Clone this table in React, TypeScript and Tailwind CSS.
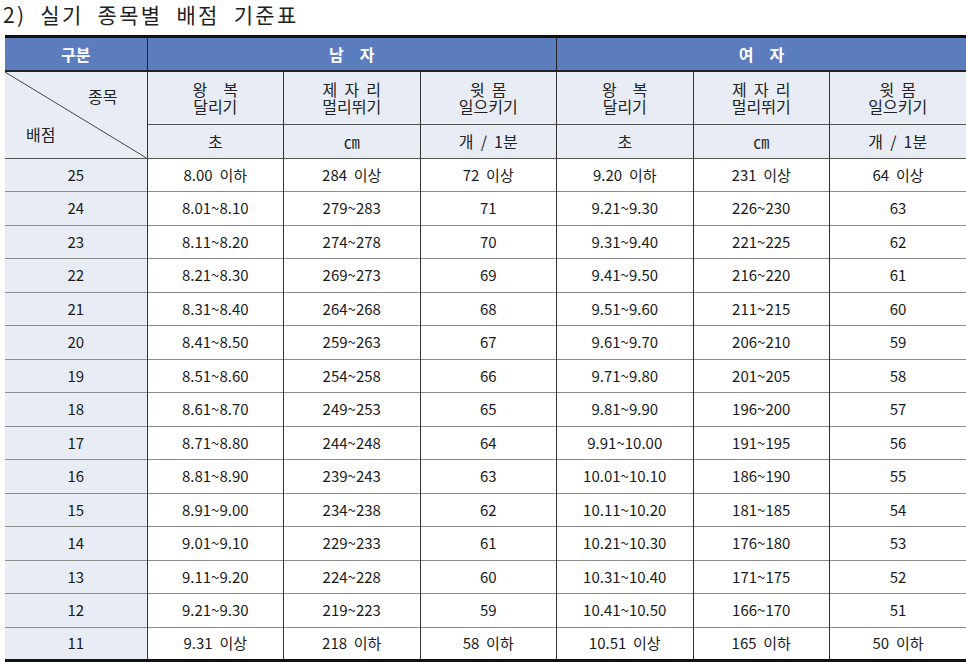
const rows: [number, string, string, string, string, string, string][] = [
  [25, "8.00 이하", "284 이상", "72 이상", "9.20 이하", "231 이상", "64 이상"],
  [24, "8.01~8.10", "279~283", "71", "9.21~9.30", "226~230", "63"],
  [23, "8.11~8.20", "274~278", "70", "9.31~9.40", "221~225", "62"],
  [22, "8.21~8.30", "269~273", "69", "9.41~9.50", "216~220", "61"],
  [21, "8.31~8.40", "264~268", "68", "9.51~9.60", "211~215", "60"],
  [20, "8.41~8.50", "259~263", "67", "9.61~9.70", "206~210", "59"],
  [19, "8.51~8.60", "254~258", "66", "9.71~9.80", "201~205", "58"],
  [18, "8.61~8.70", "249~253", "65", "9.81~9.90", "196~200", "57"],
  [17, "8.71~8.80", "244~248", "64", "9.91~10.00", "191~195", "56"],
  [16, "8.81~8.90", "239~243", "63", "10.01~10.10", "186~190", "55"],
  [15, "8.91~9.00", "234~238", "62", "10.11~10.20", "181~185", "54"],
  [14, "9.01~9.10", "229~233", "61", "10.21~10.30", "176~180", "53"],
  [13, "9.11~9.20", "224~228", "60", "10.31~10.40", "171~175", "52"],
  [12, "9.21~9.30", "219~223", "59", "10.41~10.50", "166~170", "51"],
  [11, "9.31 이상", "218 이하", "58 이하", "10.51 이상", "165 이하", "50 이하"],
];

const events = ["왕　복\n달리기", "제  자  리\n멀리뛰기", "윗  몸\n일으키기"];
const units = ["초", "㎝", "개  /  1분"];

const font = { fontFamily: '"Noto Sans CJK KR", "Noto Sans", sans-serif' };

export default function App() {
  return (
    <div className="w-[966px] h-[662px] bg-white overflow-hidden text-[#1a1a1a]" style={font}>
      <div className="h-[35px] pl-[3px] pt-[1px] text-[21px] leading-[26px] tracking-[2.3px] text-[#222] whitespace-pre">
        2)  실기  종목별  배점  기준표
      </div>
      <table className="ml-[5px] w-[961px] table-fixed border-collapse border-t-[3px] border-b-[3px] border-t-[#111] border-b-[#111] text-center">
        <colgroup>
          <col className="w-[142px]" />
          <col className="w-[136.5px]" />
          <col className="w-[136.5px]" />
          <col className="w-[136.5px]" />
          <col className="w-[136.5px]" />
          <col className="w-[136.5px]" />
          <col className="w-[136.5px]" />
        </colgroup>
        <thead>
          <tr className="h-[34px] bg-[#5b7dbe] text-white font-bold text-[16px] border-b-2 border-b-[#222]">
            <td className="border-r border-r-[#222]">구분</td>
            <td colSpan={3} className="border-r border-r-[#222] whitespace-pre">남　자</td>
            <td colSpan={3} className="whitespace-pre">여　자</td>
          </tr>
          <tr className="h-[53px] bg-[#e8ecf5] text-[16px] leading-[17px] border-b border-b-[#555] text-[#222]">
            <td rowSpan={2} className="relative border-r border-r-[#333] border-b border-b-[#555] p-0">
              <svg className="absolute inset-0 w-full h-full" viewBox="0 0 142 86" preserveAspectRatio="none">
                <line x1="0" y1="0" x2="142" y2="86" stroke="#444" strokeWidth="1" />
              </svg>
              <div className="relative h-[86px] text-[16px] leading-[18px]">
                <span className="absolute left-[83px] top-[15px]">종목</span>
                <span className="absolute left-[21px] top-[53px]">배점</span>
              </div>
            </td>
            {[0, 1].map((g) =>
              events.map((e, i) => (
                <td key={`${g}-${i}`} className="border-r border-r-[#333] whitespace-pre pt-[1px]">
                  {e}
                </td>
              ))
            )}
          </tr>
          <tr className="h-[33px] bg-[#e8ecf5] text-[16px] text-[#222]">
            {[0, 1].map((g) =>
              units.map((u, i) => (
                <td key={`${g}-${i}`} className="border-r border-r-[#333] border-b border-b-[#555] whitespace-pre">
                  {u}
                </td>
              ))
            )}
          </tr>
        </thead>
        <tbody className="text-[15px]">
          {rows.map((r) => (
            <tr key={r[0]} className="h-[33.5px] border-b border-b-[#8c8c8c] last:border-b-0">
              <td className="bg-[#e8ecf5] border-r border-r-[#333]">{r[0]}</td>
              {r.slice(1).map((c, i) => (
                <td key={i} className="border-r border-r-[#333] last:border-r-0 whitespace-pre">
                  {String(c).replace(" ", "  ")}
                </td>
              ))}
            </tr>
          ))}
        </tbody>
      </table>
    </div>
  );
}
